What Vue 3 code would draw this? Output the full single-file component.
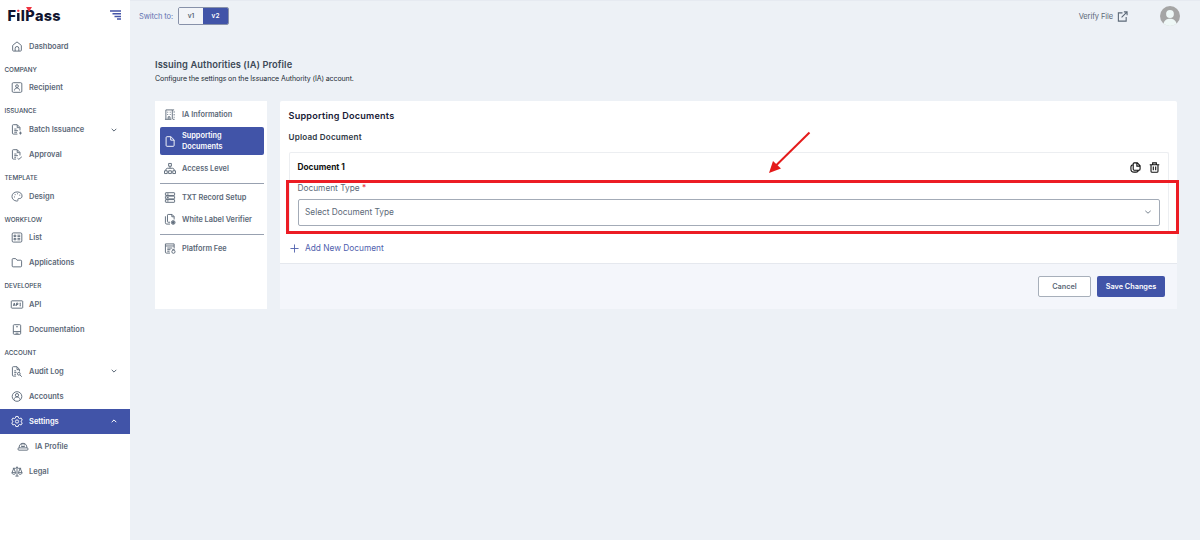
<script setup>
import { ref } from 'vue'

const version = ref('v2')

const sections = [
  { items: [{ label: 'Dashboard', icon: 'home' }] },
  { title: 'COMPANY', items: [{ label: 'Recipient', icon: 'recipient' }] },
  {
    title: 'ISSUANCE',
    items: [
      { label: 'Batch Issuance', icon: 'fileAdd', arrow: 'down' },
      { label: 'Approval', icon: 'fileCheck' }
    ]
  },
  { title: 'TEMPLATE', items: [{ label: 'Design', icon: 'palette' }] },
  {
    title: 'WORKFLOW',
    items: [
      { label: 'List', icon: 'list' },
      { label: 'Applications', icon: 'folder' }
    ]
  },
  {
    title: 'DEVELOPER',
    items: [
      { label: 'API', icon: 'api' },
      { label: 'Documentation', icon: 'book' }
    ]
  },
  {
    title: 'ACCOUNT',
    items: [
      { label: 'Audit Log', icon: 'fileSearch', arrow: 'down' },
      { label: 'Accounts', icon: 'user' },
      { label: 'Settings', icon: 'gear', arrow: 'up', active: true },
      { label: 'IA Profile', icon: 'profile', sub: true },
      { label: 'Legal', icon: 'scales' }
    ]
  }
]

const tabs = [
  { label: 'IA Information', icon: 'building' },
  { label: 'Supporting Documents', icon: 'file', active: true },
  { label: 'Access Level', icon: 'tree', divider: true },
  { label: 'TXT Record Setup', icon: 'server' },
  { label: 'White Label Verifier', icon: 'copyCheck', divider: true },
  { label: 'Platform Fee', icon: 'fee' }
]

const icons = {
  home: 'M2.500 10.500q0-1 1-1.800L12 2l8.500 6.700q1 .8 1 1.800V20q0 2-2 2h-15q-2 0-2-2zM8 22v-6a4 4 0 0 1 8 0v6',
  recipient: 'M4 1.500h16A2.500 2.500 0 0 1 22.500 4v16a2.500 2.500 0 0 1-2.500 2.500H4A2.500 2.500 0 0 1 1.500 20V4A2.500 2.500 0 0 1 4 1.500zM9 9a3 3 0 1 0 6 0a3 3 0 1 0-6 0M6.500 18.500c.5-4 2-5.500 5.500-5.500s5 1.500 5.500 5.500',
  fileAdd: 'M13 22H4q-2 0-2-2V3.500q0-2 2-2h8.500l6 6V14M12.500 2v6H18M6 11h5M6 14.500h8M6 18h6M19.500 16.500v6.500M16.500 19.800h6',
  fileCheck: 'M10 22H4q-2 0-2-2V3.500q0-2 2-2h8.500l6 6V14M12.500 2v6H18M6 11h5M6 14.500h8M6 18h4M13 20l3 2.500 6.500-5.500',
  palette: 'M11.500 22C5 21.500 1 17 1 12 1 6 6 2 12.500 2S23 6 23 11c0 4-3 5.500-6 5.500-3 0-3.500 1-3 2.500s0 3-2.500 3zM5.500 13h2M7 8h2M12 6h2M17 9h2',
  list: 'M4 2h16a2.500 2.500 0 0 1 2.500 2.500v15A2.500 2.500 0 0 1 20 22H4a2.500 2.500 0 0 1-2.500-2.500v-15A2.500 2.500 0 0 1 4 2zM5.500 7h4v3h-4zM5.500 14h4v3h-4zM13 7h6M13 10h6M13 14h6M13 17h6',
  folder: 'M3.500 3.500h5.500l3 3.500h8q2 0 2 2v10.500q0 2-2 2h-16.500q-2 0-2-2v-14q0-2 2-2z',
  api: 'M1 4h22q1.500 0 1.500 1.500v13Q24.500 20 23 20H1q-1.500 0-1.500-1.500v-13Q-.5 4 1 4zM4 15l2-6 2 6M5 13h3M11 15V9h3v3h-3M18 9h2M19 9v6M18 15h2',
  book: 'M6 1.500h12q2 0 2 2v17q0 2-2 2H6q-2 0-2-2v-17q0-2 2-2zM4 16.500h16M10 6h4M9 20h6',
  fileSearch: 'M10 22H4q-2 0-2-2V3.500q0-2 2-2h8l5.500 6V12M12 2v6h5M6 10.500h4M6 14h5M6 18h4M13 17a3 3 0 1 0 6 0a3 3 0 1 0-6 0M18.500 19.500 22.500 23.500',
  user: 'M1.500 12a10.500 10.500 0 1 0 21 0a10.500 10.500 0 1 0-21 0M8.500 9a3.500 3.500 0 1 0 7 0a3.500 3.500 0 1 0-7 0M5.500 19c.5-4 2.500-6 6.500-6s6 2 6.500 6',
  gear: 'M9.500 1h5l1 3.500 2 1 3.500-1 2.500 4.500-2.700 2.200v1.600L23.500 15 21 19.500l-3.500-1-2 1-1 3.500h-5l-1-3.500-2-1-3.500 1L.5 15l2.700-2.200v-1.600L.5 9 3 4.500l3.500 1 2-1zM8.500 12a3.500 3.500 0 1 0 7 0a3.500 3.500 0 1 0-7 0',
  profile: 'M3.500 15c0-6 3-10 8.500-10s8.500 4 8.500 10M3 15h18q2 0 2 2.500t-2 2.500H3q-2 0-2-2.500T3 15zM9.500 5v5M14.500 5v5M8 12h8',
  scales: 'M12 1v21M8.500 22h7M3 5h6l3-2 3 2h6M5 5 1 14.500h8zM19 5l-4 9.500h8zM1 14.500c0 5 8 5 8 0M15 14.500c0 5 8 5 8 0',
  building: 'M3 22V2h14v20M1 22.500h14M7 6v2M12.500 6v2M7 11v2M12.500 11v2M8 22v-5h4v5M17 2h4M21 5v3M21 11v3M21 17v2M18 22.500h4',
  file: 'M5.500 1.500H14l7 7v12q0 2-2 2H5.500q-2 0-2-2v-17q0-2 2-2zM13.500 2v7H21',
  tree: 'M9 1h6v6H9zM0 17h6v6H0zM9 17h6v6H9zM18 17h6v6h-6zM12 7v4.500M3 17v-3.500l3-2h12l3 2V17',
  server: 'M3 1.500h18q1 0 1 1v4q0 1-1 1H3q-1 0-1-1v-4q0-1 1-1zM3 9h18q1 0 1 1v4q0 1-1 1H3q-1 0-1-1v-4q0-1 1-1zM3 16.500h18q1 0 1 1v4q0 1-1 1H3q-1 0-1-1v-4q0-1 1-1zM5 4.500h4M5 12h4M5 19.500h4',
  copyCheck: 'M12 18H8q-1.500 0-1.500-1.500v-14Q6.500 1 8 1h8.500L21 5.500V12M16 1v5h5M2 5v14q0 3 3 3h7M15 18.500a4 4 0 1 0 8 0a4 4 0 1 0-8 0M16 18.500h6M17 17h4M17 20h4M19 15.500v6',
  fee: 'M12 22H4q-2 0-2-2V2h19v10M2 6.500h19M6 11h11M6 14.500h7M6 18h5M16 19a3.500 3.500 0 1 0 7 0a3.500 3.500 0 1 0-7 0M17 14.500h5'
}
</script>

<template>
  <div class="app">
    <aside class="sidebar">
      <div class="brand">
        <div class="logo">F<span class="logo-i">i</span>l<span class="logo-p">P<i></i></span>ass</div>
        <svg class="menu-icon" viewBox="0 0 12 10">
          <path d="M0 1h11M2.500 3.800h8.500M4.500 6.500h6.500M7 9h4" />
        </svg>
      </div>
      <nav>
        <template v-for="(section, i) in sections" :key="i">
          <div v-if="section.title" class="section-title">{{ section.title }}</div>
          <a
            v-for="item in section.items"
            :key="item.label"
            class="nav-item"
            :class="{ active: item.active, sub: item.sub }"
          >
            <svg class="icon" viewBox="0 0 24 24"><path :d="icons[item.icon]" /></svg>
            <span>{{ item.label }}</span>
            <svg v-if="item.arrow" class="chevron" viewBox="0 0 6 6">
              <path :d="item.arrow === 'down' ? 'M.7 1.800 3 4.100 5.300 1.800' : 'M.7 4.200 3 1.900 5.300 4.200'" />
            </svg>
          </a>
        </template>
      </nav>
    </aside>

    <main class="main">
      <header class="topbar">
        <span class="switch-label">Switch to:</span>
        <div class="switch">
          <button :class="{ on: version === 'v1' }" @click="version = 'v1'">v1</button>
          <button :class="{ on: version === 'v2' }" @click="version = 'v2'">v2</button>
        </div>
        <a class="verify">
          <span>Verify File</span>
          <svg viewBox="0 0 12 12"><path d="M6 2H1.500v9H10V6.500M7.500 1H11v3.500M11 1 5 7" /></svg>
        </a>
        <svg class="avatar" viewBox="0 0 20 20">
          <circle class="avatar-bg" cx="10" cy="10" r="10" />
          <circle class="avatar-fg" cx="10" cy="8" r="3.900" />
          <path class="avatar-fg" d="M3.500 17.500C4.500 14 7 12.800 10 12.800s5.500 1.200 6.500 4.700C14.800 19.200 12.500 20 10 20s-4.800-.8-6.500-2.500z" />
        </svg>
      </header>

      <section class="heading">
        <h1>Issuing Authorities (IA) Profile</h1>
        <p>Configure the settings on the Issuance Authority (IA) account.</p>
      </section>

      <div class="content">
        <div class="tabs">
          <template v-for="tab in tabs" :key="tab.label">
            <a class="tab" :class="{ active: tab.active }">
              <svg class="icon" viewBox="0 0 24 24"><path :d="icons[tab.icon]" /></svg>
              <span>{{ tab.label }}</span>
            </a>
            <hr v-if="tab.divider" />
          </template>
        </div>

        <div class="panel">
          <div class="panel-body">
            <h2>Supporting Documents</h2>
            <h3>Upload Document</h3>
            <div class="document">
              <div class="document-head">
                <strong>Document 1</strong>
                <svg viewBox="0 0 12 12">
                  <path d="M4.500 1H8l3 3v3.500Q11 9 9.500 9h-5Q3.500 9 3.500 8V2q0-1 1-1zM7.500 1v3.500H11M3.500 3Q1 3 1 5.500v2Q1 11 4.500 11h2Q9 11 9 9" />
                </svg>
                <svg viewBox="0 0 12 12">
                  <path d="M.8 3h10.400M4 3V1h4v2M2.200 3v7q0 1.200 1.200 1.200h5.200q1.200 0 1.200-1.200V3M4.700 5v4M7.300 5v4" />
                </svg>
              </div>
              <label>Document Type <em>*</em></label>
              <div class="select">
                <span>Select Document Type</span>
                <svg class="chevron" viewBox="0 0 6 6"><path d="M.3 1.800 3 4.200 5.700 1.800" /></svg>
              </div>
              <div class="highlight"></div>
              <svg class="pointer" viewBox="0 0 44 44">
                <path d="M41.500 1.500 8 34.500" />
                <polygon points="1,42 5,30 13,37.500" />
              </svg>
            </div>
            <a class="add">
              <svg viewBox="0 0 10 10"><path d="M5 .5v9M.5 5h9" /></svg>
              <span>Add New Document</span>
            </a>
          </div>
          <footer class="actions">
            <button class="cancel">Cancel</button>
            <button class="save">Save Changes</button>
          </footer>
        </div>
      </div>
    </main>
  </div>
</template>

<style>
body {
  margin: 0;
  overflow: hidden;
}
</style>

<style scoped>
* {
  box-sizing: border-box;
}

.app {
  display: flex;
  width: 1200px;
  height: 540px;
  background: #edf1f6;
  color: #5b6877;
  font-family: Inter, "Liberation Sans", sans-serif;
  font-size: 7.5px;
  line-height: 11px;
}

svg {
  display: block;
  flex: none;
  fill: none;
  stroke: currentColor;
  overflow: visible;
}

button {
  padding: 0;
  font: inherit;
}

.sidebar {
  width: 130px;
  flex: none;
  background: #fff;
}

.brand {
  display: flex;
  align-items: flex-start;
  justify-content: space-between;
  height: 33.7px;
  padding: 7px 8px 0 7.5px;
}

.logo {
  color: #10142f;
  font-size: 14.5px;
  font-weight: 800;
  line-height: 17px;
  letter-spacing: 0.3px;
}

/* the dot of the i is red, its stem is dark */
.logo-i {
  background: linear-gradient(#ef3340 5px, #10142f 5px);
  background-clip: text;
  color: transparent;
}

.logo-p {
  position: relative;
}

.logo-p i {
  position: absolute;
  top: 0;
  left: 1px;
  border: 3px solid transparent;
  border-top: 5px solid #ef3340;
  border-bottom: 0;
}

.menu-icon {
  width: 12px;
  height: 10px;
  margin-top: 3px;
  color: #4353a8;
  stroke-width: 1.4;
}

.section-title {
  height: 16.67px;
  padding: 6px 0 0 4.5px;
  color: #414e5e;
  font-size: 6.3px;
  font-weight: 500;
}

.nav-item {
  display: flex;
  align-items: center;
  gap: 6px;
  height: 25px;
  padding: 0 13px 0 11px;
  font-weight: 600;
}

.nav-item .icon,
.tab .icon {
  width: 12px;
  height: 11px;
  stroke-width: 2;
}

.nav-item.sub {
  padding-left: 17px;
}

.nav-item.active {
  background: #4154a8;
  color: #fff;
}

.chevron {
  width: 6px;
  height: 6px;
  margin-left: auto;
  stroke-width: 1;
}

.main {
  flex: 1;
  border-top: 1px solid #e6eaf1;
}

.topbar {
  display: flex;
  align-items: center;
  height: 30px;
  padding: 0 20px 0 9px;
}

.switch-label {
  width: 39px;
  color: #6170b0;
  white-space: nowrap;
  letter-spacing: -0.1px;
}

.switch {
  display: flex;
  width: 51px;
  height: 18px;
  border: 1px solid #8791a9;
  border-radius: 2px;
  overflow: hidden;
}

.switch button {
  width: 24px;
  border: 0;
  background: #f2f4f8;
  color: #5b6877;
  font-size: 6.5px;
  font-weight: 600;
}

.switch button.on {
  flex: 1;
  background: #4154a8;
  color: #fff;
}

.verify {
  display: flex;
  align-items: center;
  gap: 4px;
  margin-left: auto;
}

.verify span {
  letter-spacing: -0.1px;
}

.verify svg {
  width: 11px;
  height: 11px;
  stroke-width: 1.2;
}

.avatar {
  width: 20px;
  height: 20px;
  margin-left: 32px;
}

.avatar-bg {
  fill: #a5a5a5;
  stroke: none;
}

.avatar-fg {
  fill: #eef7f6;
  stroke: none;
}

.heading {
  height: 70px;
  padding: 27px 0 0 25px;
}

h1,
h2,
h3,
p {
  margin: 0;
}

h1 {
  color: #3d4957;
  font-size: 9.3px;
  font-weight: 600;
  line-height: 13px;
  letter-spacing: 0.08px;
}

p {
  margin-top: 2px;
  color: #222b35;
  font-size: 7px;
  letter-spacing: -0.09px;
}

.content {
  display: flex;
  gap: 13px;
  height: 208px;
  padding: 0 23px 0 25px;
}

.tabs {
  width: 112px;
  flex: none;
  padding: 2px 3.5px 0 4.5px;
  background: #fff;
}

.tab {
  display: flex;
  align-items: center;
  gap: 6px;
  height: 22.5px;
  padding-left: 4.5px;
  font-size: 7.35px;
  font-weight: 600;
}

.tab.active {
  height: 28px;
  margin: 1.5px 0 2.5px;
  padding-right: 30px;
  border-radius: 2px;
  background: #4154a8;
  color: #fff;
}

hr {
  height: 1px;
  margin: 3px 0 2px;
  border: 0;
  background: #98a1b0;
}

.panel {
  display: flex;
  flex: 1;
  flex-direction: column;
  border-radius: 2px;
  background: #fff;
}

.panel-body {
  height: 162px;
  padding: 8px 8.5px 0;
}

h2 {
  color: #171a36;
  font-size: 9.1px;
  font-weight: 600;
  line-height: 13px;
  letter-spacing: 0.22px;
}

h3 {
  margin-top: 9px;
  color: #2e3744;
  font-size: 8.1px;
  font-weight: 600;
  line-height: 12px;
  letter-spacing: 0.2px;
}

.document {
  position: relative;
  height: 80px;
  margin-top: 9px;
  padding: 0 8px;
  border: 1px solid #eceef1;
  border-bottom: 0;
  border-radius: 2px;
}

.document-head {
  display: flex;
  align-items: center;
  gap: 8px;
  height: 29px;
  color: #111;
}

.document-head strong {
  margin-right: auto;
  font-size: 8.3px;
  font-weight: 700;
}

.document-head svg {
  width: 11px;
  height: 11px;
  stroke-width: 1.2;
}

label {
  display: block;
  height: 17px;
  font-size: 8.3px;
  line-height: 12px;
}

label em {
  color: #e5383b;
  font-style: normal;
}

.select {
  display: flex;
  align-items: center;
  height: 26.5px;
  padding: 0 8px 0 6.5px;
  border: 1px solid #a3abb7;
  border-radius: 2px;
  font-size: 8.3px;
}

.select .chevron {
  stroke-width: 0.8;
}

.highlight {
  position: absolute;
  top: 27px;
  right: -11px;
  left: -4px;
  height: 54px;
  border: 3px solid #ec1c24;
}

.pointer {
  position: absolute;
  top: -22px;
  left: 478px;
  width: 44px;
  height: 44px;
  color: #e41b1b;
  stroke-width: 2;
}

.pointer polygon {
  fill: currentColor;
  stroke: none;
}

.add {
  display: flex;
  align-items: center;
  gap: 6px;
  height: 33px;
  padding-left: 1.5px;
  color: #4f60ad;
  font-size: 8.3px;
}

.add svg {
  width: 9px;
  height: 9px;
}

.actions {
  display: flex;
  flex: 1;
  justify-content: flex-end;
  gap: 6px;
  padding: 12px 12px 0 0;
  border-top: 1px solid #e5e8ee;
  background: #f4f6fb;
}

.actions button {
  height: 21px;
  border-radius: 2px;
  font-size: 7.3px;
  font-weight: 600;
}

.cancel {
  width: 53px;
  border: 1px solid #a7afba;
  background: #fff;
  color: #5b6877;
}

.save {
  width: 68px;
  border: 0;
  background: #4154a8;
  color: #fff;
}
</style>
